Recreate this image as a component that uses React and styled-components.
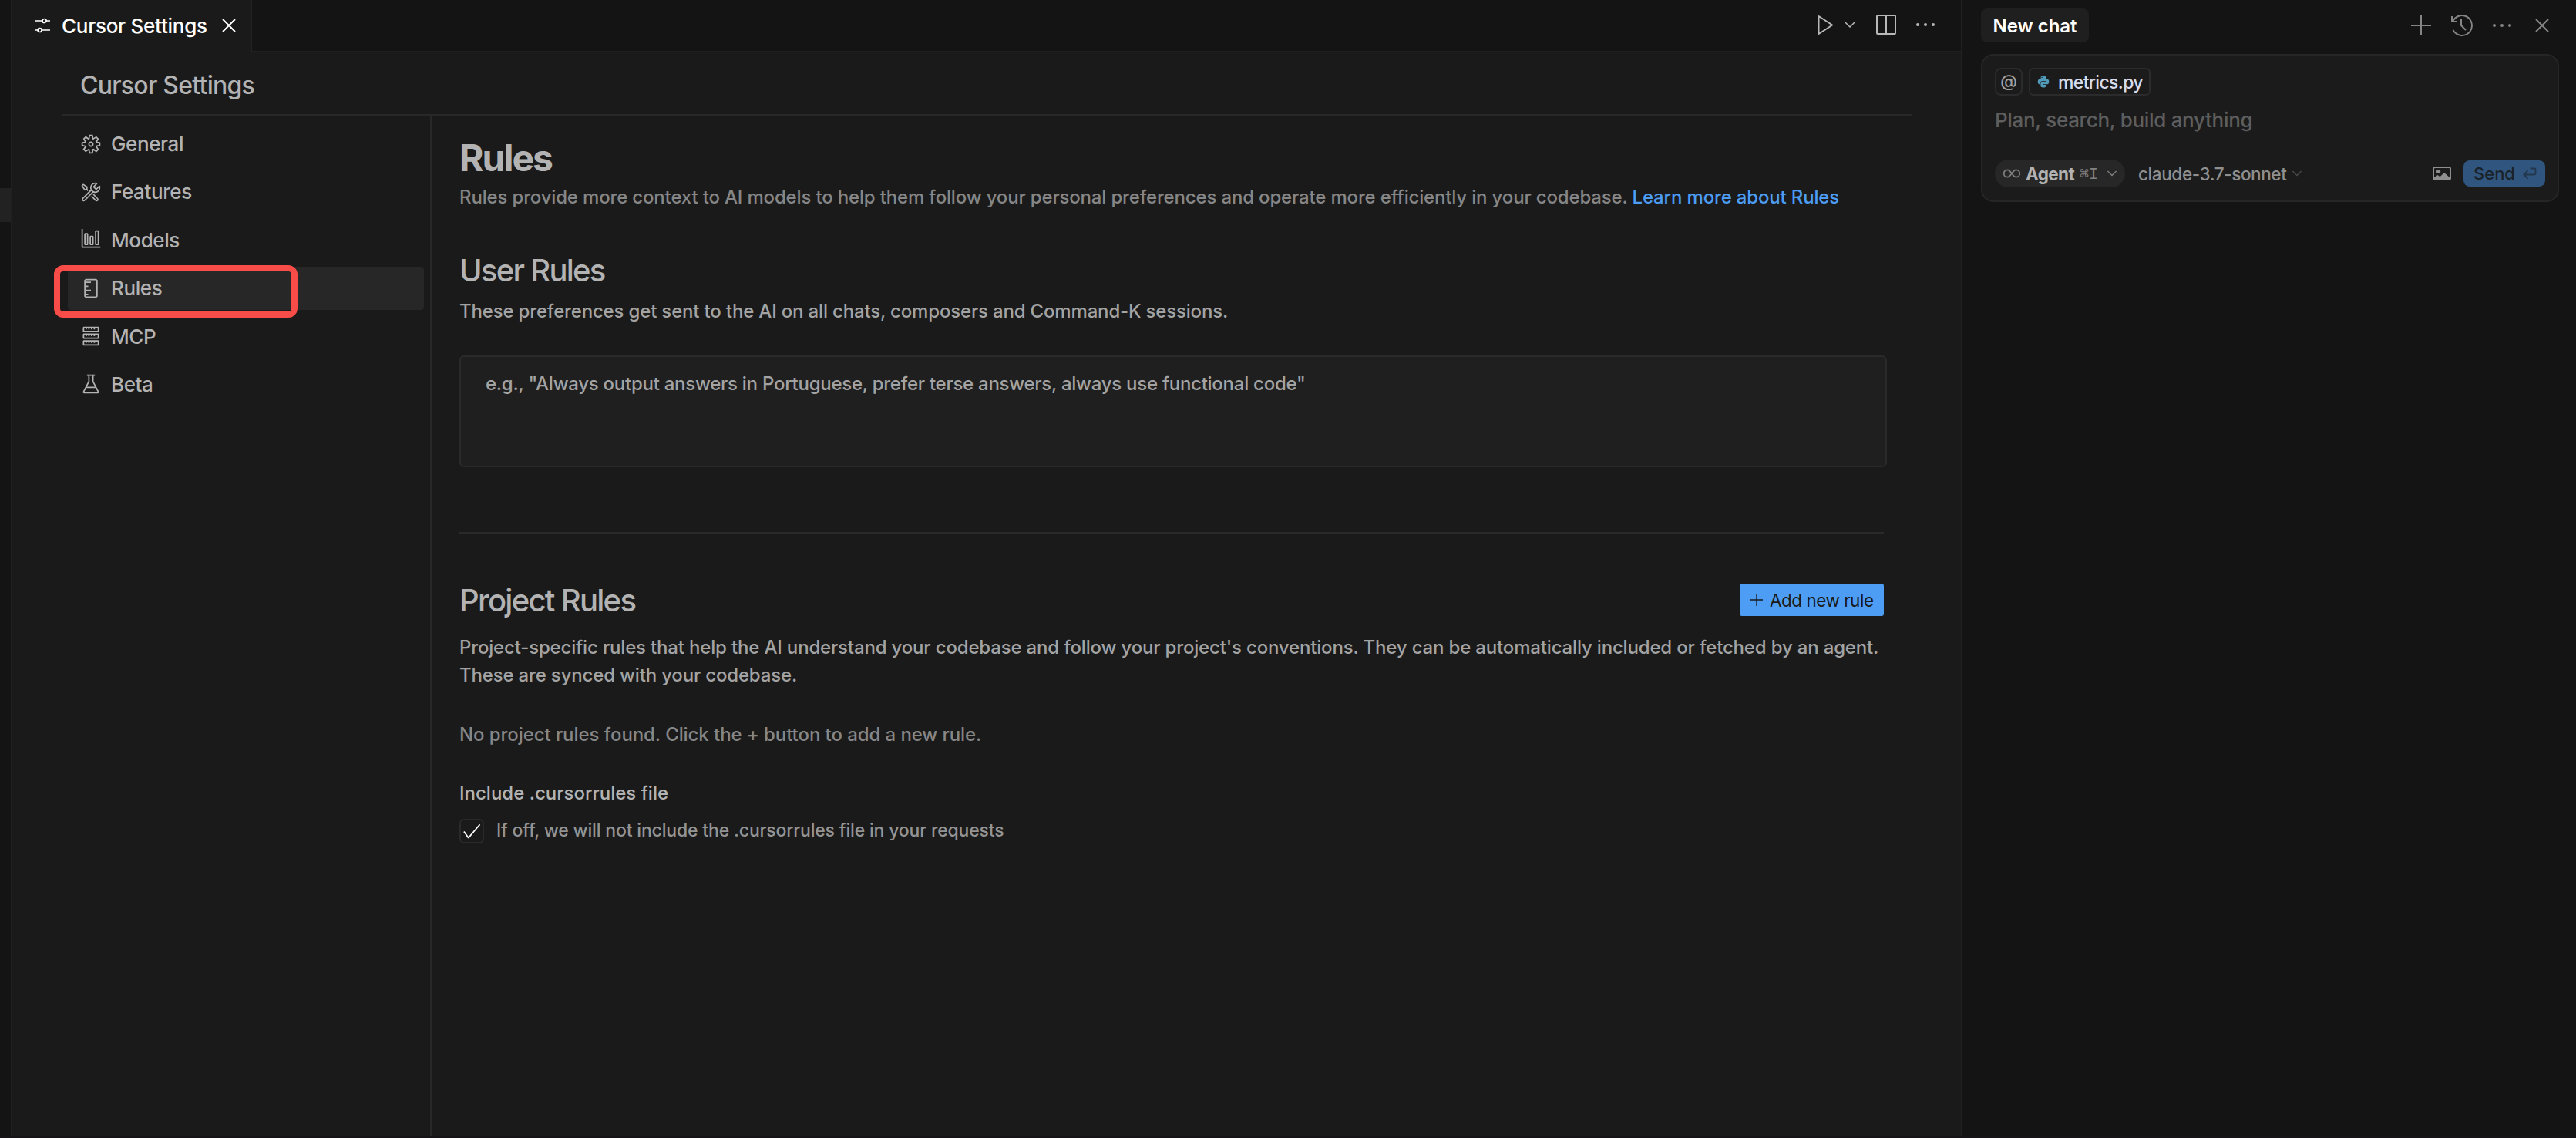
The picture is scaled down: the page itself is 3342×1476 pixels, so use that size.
import React from "react";
import styled, { createGlobalStyle } from "styled-components";
import {
  VscBeaker,
  VscCheck,
  VscClose,
  VscEllipsis,
  VscGear,
  VscGraph,
  VscHistory,
  VscServer,
  VscSymbolRuler,
  VscTools,
} from "react-icons/vsc";

const NAV_ITEMS = [
  { label: "General", icon: VscGear },
  { label: "Features", icon: VscTools },
  { label: "Models", icon: VscGraph },
  { label: "Rules", icon: VscSymbolRuler, active: true },
  { label: "MCP", icon: VscServer },
  { label: "Beta", icon: VscBeaker },
];

const SlidersIcon = () => (
  <svg width="20" height="20" viewBox="0 0 20 20" fill="none" stroke="currentColor" strokeWidth="1.7">
    <path d="M0 4h10M15 4h5M0 16h4M9 16h11" />
    <circle cx="12.6" cy="4" r="2.5" />
    <circle cx="6.6" cy="16" r="2.5" />
  </svg>
);

const PlayIcon = () => (
  <svg width="21" height="28" viewBox="0 0 21 28" fill="none" stroke="currentColor" strokeWidth="2" strokeLinejoin="round">
    <path d="M1.5 3v23l17.7-11.5z" />
  </svg>
);

const SplitIcon = () => (
  <svg width="26" height="26" viewBox="0 0 26 26" fill="none" stroke="currentColor" strokeWidth="2">
    <rect x="1" y="1" width="24" height="24" rx="1" />
    <path d="M13 1v24" />
  </svg>
);

const PlusIcon = ({ size = 26, stroke = 2 }) => (
  <svg width={size} height={size} viewBox="0 0 26 26" fill="none" stroke="currentColor" strokeWidth={stroke}>
    <path d="M13 0v26M0 13h26" />
  </svg>
);

const ChevronIcon = ({ size = 14 }) => (
  <svg width={size} height={size} viewBox="0 0 14 14" fill="none" stroke="currentColor" strokeWidth="1.5">
    <path d="M0.5 3.5l6.5 6.5l6.5-6.5" />
  </svg>
);

const InfinityIcon = () => (
  <svg width="22" height="12" viewBox="0 0 22 12" fill="none" stroke="currentColor" strokeWidth="1.7">
    <path d="M11 6C9 3.2 7.6 1.3 5.4 1.3a4.7 4.7 0 0 0 0 9.4C7.6 10.7 9 8.8 11 6s3.4-4.7 5.6-4.7a4.7 4.7 0 0 1 0 9.4C14.4 10.7 13 8.8 11 6z" />
  </svg>
);

const PythonIcon = () => (
  <svg width="16" height="16" viewBox="0 0 16 16" fill="#519aba">
    <path d="M7.9 0.6C5.8 0.6 4.6 1.2 4.6 2.6v1.5h3.6v0.7H2.9C1.4 4.8 0.7 6.2 0.7 8s0.7 3.2 2 3.2h1.4V9.5c0-1.3 1-2.2 2.3-2.2h3.4c1.1 0 1.8-0.8 1.8-1.8V2.6c0-1.3-1.4-2-3.7-2zM6.1 1.7a0.7 0.7 0 1 1 0 1.4a0.7 0.7 0 0 1 0-1.4z" />
    <path d="M8.1 15.4c2.1 0 3.3-0.6 3.3-2v-1.5H7.8v-0.7h5.3c1.5 0 2.2-1.4 2.2-3.2s-0.7-3.2-2-3.2h-1.4v1.7c0 1.3-1 2.2-2.3 2.2H6.2c-1.1 0-1.8 0.8-1.8 1.8v2.9c0 1.3 1.4 2 3.7 2zM9.9 14.3a0.7 0.7 0 1 1 0-1.4a0.7 0.7 0 0 1 0 1.4z" />
  </svg>
);

const ImageIcon = () => (
  <svg width="24" height="18" viewBox="0 0 24 18" fill="none">
    <rect x="1" y="1" width="22" height="16" rx="2" stroke="currentColor" strokeWidth="2" />
    <circle cx="7.6" cy="6.5" r="2.6" fill="currentColor" />
    <path d="M1.5 14.5l5-3.5l3 2.2l5.5-5.2l7.5 6.5v2.5h-21z" fill="currentColor" />
  </svg>
);

const ReturnIcon = () => (
  <svg width="18" height="16" viewBox="0 0 18 16" fill="none" stroke="currentColor" strokeWidth="1.8">
    <path d="M9.5 1.5h5.5a1.5 1.5 0 0 1 1.5 1.5v5a1.5 1.5 0 0 1-1.5 1.5H1.5M6.5 4.2L1.3 9.5l5.2 5.3" />
  </svg>
);

const App = () => {
  return (
    <>
      <GlobalStyle />
      <Window>
        <SideStrip>
          <StripSelection />
        </SideStrip>

        <Editor>
          <TabBar>
            <Tab>
              <SlidersIcon />
              <TabLabel>Cursor Settings</TabLabel>
              <VscClose size={32} />
            </Tab>
            <EditorActions>
              <PlayIcon />
              <ChevronIcon />
              <SplitIcon />
              <VscEllipsis size={32} />
            </EditorActions>
          </TabBar>

          <Settings>
            <PageTitle>Cursor Settings</PageTitle>
            <SettingsBody>
              <Nav>
                {NAV_ITEMS.map(({ label, icon: Icon, active }) => (
                  <NavItem key={label} $active={active}>
                    <Icon size={28} />
                    <span>{label}</span>
                    {active && <Highlight />}
                  </NavItem>
                ))}
              </Nav>

              <Content>
                <Heading>Rules</Heading>
                <Intro>
                  Rules provide more context to AI models to help them follow your personal preferences and operate
                  more efficiently in your codebase. <Link>Learn more about Rules</Link>
                </Intro>

                <SubHeading>User Rules</SubHeading>
                <Description>
                  These preferences get sent to the AI on all chats, composers and Command-K sessions.
                </Description>
                <RulesInput placeholder={'e.g., "Always output answers in Portuguese, prefer terse answers, always use functional code"'} />

                <Divider />

                <SectionRow>
                  <SubHeading $flush>Project Rules</SubHeading>
                  <AddButton>
                    <PlusIcon size={16} stroke={2.2} />
                    Add new rule
                  </AddButton>
                </SectionRow>
                <ProjectText>
                  Project-specific rules that help the AI understand your codebase and follow your project's
                  conventions. They can be automatically included or fetched by an agent.
                  <br />
                  These are synced with your codebase.
                </ProjectText>
                <EmptyText>No project rules found. Click the + button to add a new rule.</EmptyText>

                <OptionTitle>Include .cursorrules file</OptionTitle>
                <OptionRow>
                  <Checkbox>
                    <VscCheck size={28} />
                  </Checkbox>
                  <OptionText>If off, we will not include the .cursorrules file in your requests</OptionText>
                </OptionRow>
              </Content>
            </SettingsBody>
          </Settings>
        </Editor>

        <ChatPane>
          <ChatHeader>
            <ChatTab>New chat</ChatTab>
            <ChatActions>
              <PlusIcon />
              <VscHistory size={32} />
              <VscEllipsis size={32} />
              <VscClose size={32} />
            </ChatActions>
          </ChatHeader>

          <Composer>
            <ContextRow>
              <MentionButton>@</MentionButton>
              <FileChip>
                <PythonIcon />
                <span>metrics.py</span>
              </FileChip>
            </ContextRow>
            <Prompt>Plan, search, build anything</Prompt>
            <ComposerFooter>
              <ModePill>
                <InfinityIcon />
                <ModeName>Agent</ModeName>
                <Shortcut>⌘I</Shortcut>
                <ChevronIcon size={12} />
              </ModePill>
              <ModelPicker>
                <span>claude-3.7-sonnet</span>
                <ChevronIcon size={12} />
              </ModelPicker>
              <ImageButton>
                <ImageIcon />
              </ImageButton>
              <SendButton>
                <span>Send</span>
                <ReturnIcon />
              </SendButton>
            </ComposerFooter>
          </Composer>
        </ChatPane>
      </Window>
    </>
  );
};

const GlobalStyle = createGlobalStyle`
  * {
    box-sizing: border-box;
  }

  body {
    margin: 0;
    background: #141414;
    color: #b3b3b3;
    font-family: Inter, "Liberation Sans", sans-serif;
    font-size: 24px;
    font-weight: 450;
    -webkit-font-smoothing: antialiased;
  }

  h1, h2, h3, p {
    margin: 0;
  }

  svg {
    display: block;
    flex: none;
  }
`;

const Window = styled.div`
  display: flex;
  width: 100%;
  height: 1476px;
  overflow: hidden;
  border-bottom: 2px solid #171417;
`;

const SideStrip = styled.div`
  width: 16px;
  flex: none;
  padding-top: 244px;
  background: #141414;
  border-right: 2px solid #202020;
`;

const StripSelection = styled.div`
  height: 44px;
  background: #222222;
`;

const Editor = styled.main`
  width: 2528px;
  flex: none;
  display: flex;
  flex-direction: column;
  background: #1a1a1a;
`;

const TabBar = styled.div`
  display: flex;
  height: 68px;
  flex: none;
`;

const Tab = styled.div`
  width: 311px;
  display: flex;
  align-items: center;
  padding: 0 0 2px 29px;
  border-right: 2px solid #242424;
  color: #ffffff;
`;

const TabLabel = styled.span`
  width: 188px;
  margin: 0 13px 0 15px;
  padding-top: 2px;
  font-size: 26px;
  line-height: 36px;
  letter-spacing: -0.27px;
  white-space: nowrap;
`;

const EditorActions = styled.div`
  flex: 1;
  display: flex;
  align-items: center;
  justify-content: flex-end;
  padding: 0 30px 2px 0;
  background: #141414;
  border-bottom: 2px solid #202020;
  color: #b8b8b8;

  svg:nth-child(2) {
    margin: 0 27px 0 14px;
  }

  svg:nth-child(3) {
    margin-right: 22px;
  }
`;

const Settings = styled.section`
  flex: 1;
  display: flex;
  flex-direction: column;
  padding: 0 64px 0 64px;
`;

const PageTitle = styled.h1`
  height: 82px;
  padding: 23px 0 0 24px;
  border-bottom: 2px solid #282828;
  font-size: 32px;
  font-weight: 450;
  line-height: 40px;
  letter-spacing: -0.75px;
`;

const SettingsBody = styled.div`
  flex: 1;
  display: flex;
`;

const Nav = styled.nav`
  width: 480px;
  flex: none;
  display: flex;
  flex-direction: column;
  gap: 6.4px;
  padding: 8.5px 8px;
  border-right: 2px solid #282828;
`;

const NavItem = styled.div`
  position: relative;
  display: flex;
  align-items: center;
  gap: 12px;
  height: 56px;
  flex: none;
  padding: 0 16px;
  border-radius: 4px;
  background: ${({ $active }) => ($active ? "#272727" : "transparent")};
  font-size: 26px;
  letter-spacing: -0.4px;
`;

// red frame drawn over the selected item
const Highlight = styled.div`
  position: absolute;
  top: -2px;
  left: -18px;
  width: 316px;
  height: 68px;
  border: 8px solid #f84c48;
  border-radius: 12px;
`;

const Content = styled.div`
  flex: 1;
  min-width: 0;
  padding: 27px 36px 0 36px;
  white-space: nowrap;
`;

const Heading = styled.h2`
  font-size: 48px;
  font-weight: 650;
  line-height: 56px;
  letter-spacing: -2px;
`;

const Intro = styled.p`
  margin-top: 7px;
  color: #868686;
  letter-spacing: -0.165px;
  line-height: 32px;
`;

const Link = styled.a`
  color: #4c9df3;
`;

const SubHeading = styled.h3`
  margin-top: ${({ $flush }) => ($flush ? "0" : "55px")};
  padding-top: ${({ $flush }) => ($flush ? "2px" : "0")};
  font-size: 40px;
  font-weight: 450;
  line-height: ${({ $flush }) => ($flush ? "50px" : "48px")};
  letter-spacing: -1.72px;
`;

const Description = styled.p`
  margin-top: 11px;
  color: #a3a3a3;
  line-height: 36px;
  letter-spacing: -0.17px;
`;

const RulesInput = styled.textarea`
  display: block;
  width: calc(100% + 4px);
  height: 145px;
  margin-top: 39px;
  padding: 17px 32px;
  background: #1f1f1f;
  border: 2px solid #2a2a2a;
  border-radius: 6px;
  outline: none;
  resize: none;
  font: inherit;
  letter-spacing: -0.26px;
  line-height: 36px;

  &::placeholder {
    color: #a3a3a3;
  }
`;

const Divider = styled.hr`
  height: 2px;
  margin: 84px 0 60px;
  border: none;
  background: #2a2a2a;
`;

const SectionRow = styled.div`
  display: flex;
  align-items: center;
  justify-content: space-between;
`;

const AddButton = styled.button`
  display: flex;
  align-items: center;
  gap: 9px;
  width: 187px;
  height: 42px;
  padding: 0 0 0 14px;
  border: none;
  border-radius: 3px;
  background: #4c9df3;
  color: #1a1a1a;
  font-family: inherit;
  font-size: 22.5px;
  font-weight: 420;
  letter-spacing: -0.5px;
  white-space: nowrap;
`;

const ProjectText = styled(Description)`
  margin-top: 18px;
`;

const EmptyText = styled(Description)`
  margin-top: 41px;
  color: #868686;
  letter-spacing: -0.08px;
`;

const OptionTitle = styled.h3`
  margin-top: 40px;
  font-size: 24px;
  font-weight: 550;
  line-height: 36px;
  letter-spacing: 0;
`;

const OptionRow = styled.label`
  display: flex;
  gap: 16px;
  margin-top: 15px;
`;

const Checkbox = styled.span`
  width: 32px;
  height: 32px;
  border: 2px solid #2a2a2a;
  border-radius: 6px;
  color: #ffffff;
`;

const OptionText = styled.span`
  color: #949494;
  font-size: 23px;
  letter-spacing: -0.17px;
  line-height: 30px;
`;

const ChatPane = styled.aside`
  flex: 1;
  padding: 0 22px 0 24px;
  background: #141414;
  border-left: 2px solid #202020;
`;

const ChatHeader = styled.div`
  display: flex;
  align-items: center;
  justify-content: space-between;
  height: 66px;
`;

const ChatTab = styled.div`
  width: 140px;
  height: 44px;
  border-radius: 8px;
  background: #1f1f1f;
  color: #ffffff;
  font-weight: 600;
  line-height: 46px;
  text-align: center;
`;

const ChatActions = styled.div`
  display: flex;
  align-items: center;
  gap: 20px;
  padding-right: 6px;
  color: #858585;

  svg:first-child {
    margin-right: 4px;
  }
`;

const Composer = styled.section`
  height: 192px;
  margin-top: 4px;
  padding: 16px 16px 0 16px;
  background: #1b1b1b;
  border: 2px solid #262626;
  border-radius: 16px;
`;

const ContextRow = styled.div`
  display: flex;
  gap: 8px;
  height: 36px;
`;

const MentionButton = styled.div`
  width: 36px;
  border: 2px solid #2b2b2b;
  border-radius: 8px;
  color: #a0a0a0;
  font-size: 22px;
  line-height: 30px;
  text-align: center;
`;

const FileChip = styled.div`
  display: flex;
  align-items: center;
  gap: 11px;
  width: 158px;
  padding-left: 9px;
  border: 2px solid #2b2b2b;
  border-radius: 6px;
  color: #d6dcec;
  font-size: 23px;
  letter-spacing: -0.65px;
  white-space: nowrap;

  span {
    padding-top: 1px;
  }
`;

const Prompt = styled.p`
  margin-top: 14px;
  color: #5e5e5e;
  font-size: 26px;
  letter-spacing: -0.32px;
  line-height: 36px;
`;

const ComposerFooter = styled.div`
  display: flex;
  align-items: center;
  height: 36px;
  margin-top: 33px;
  color: #8f8f8f;
  white-space: nowrap;
`;

const ModePill = styled.div`
  display: flex;
  align-items: center;
  width: 169px;
  height: 36px;
  padding: 0 11px;
  border-radius: 18px;
  background: #272727;
  color: #808080;
`;

const ModeName = styled.span`
  width: 63px;
  margin: 0 7px;
  color: #b3b3b3;
  font-size: 22.5px;
  font-weight: 700;
  letter-spacing: -0.6px;
`;

const Shortcut = styled.span`
  width: 25px;
  margin-right: 11px;
  font-family: "DejaVu Sans Mono", monospace;
  font-size: 20px;
`;

const ModelPicker = styled.div`
  flex: 1;
  display: flex;
  align-items: center;
  gap: 8px;
  margin-left: 17px;
  font-size: 22.5px;
  letter-spacing: -0.4px;

  svg {
    opacity: 0.4;
  }
`;

const ImageButton = styled.div`
  margin-right: 16px;
  color: #8f8f8f;
`;

const SendButton = styled.button`
  display: flex;
  align-items: center;
  gap: 10px;
  width: 106px;
  height: 34px;
  padding: 0 0 0 13px;
  border: none;
  border-radius: 8px;
  background: #30557e;
  color: #1a222b;
  font-family: inherit;
  font-size: 22px;
  font-weight: 450;

  svg {
    opacity: 0.6;
  }
`;

export default App;
